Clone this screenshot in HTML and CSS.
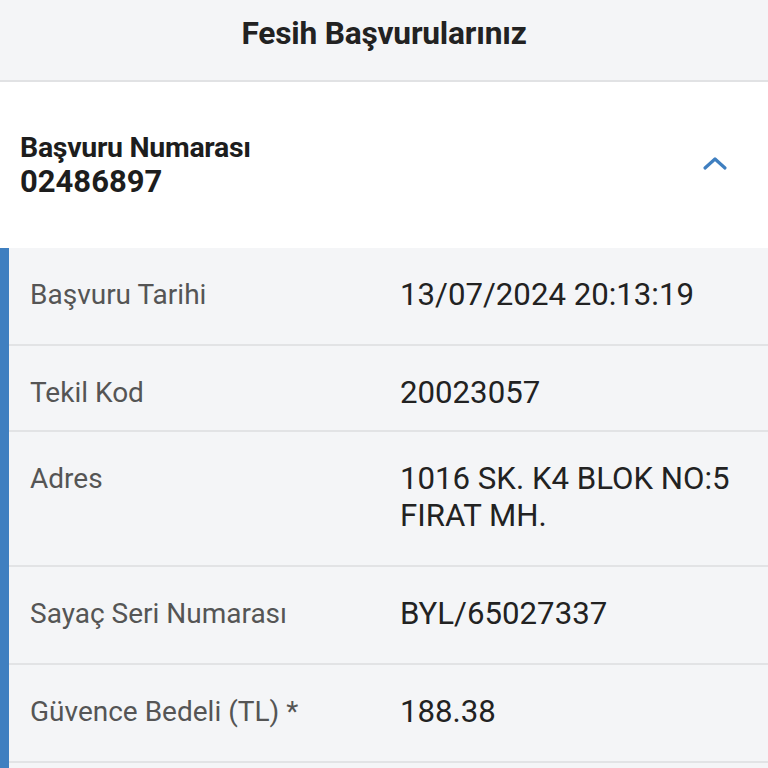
FILE: index.html
```html
<!DOCTYPE html>
<html lang="tr">
<head>
<meta charset="utf-8">
<link rel="stylesheet" href="styles.css">
</head>
<body>
<header class="topbar"><h1 class="title">Fesih Başvurularınız</h1></header>
<section class="card">
  <div class="card-head">
    <div class="head-text">
      <div class="head-label">Başvuru Numarası</div>
      <div class="head-number">02486897</div>
    </div>
    <svg class="chevron" width="26" height="16" viewBox="0 0 26 16"><path d="M3 13 L13 4 L23 13" fill="none" stroke="#3f7fc0" stroke-width="3.2" stroke-linecap="round" stroke-linejoin="round"/></svg>
  </div>
  <div class="details">
    <div class="row"><div class="label">Başvuru Tarihi</div><div class="value">13/07/2024 20:13:19</div></div>
    <div class="row row-tight"><div class="label">Tekil Kod</div><div class="value">20023057</div></div>
    <div class="row"><div class="label">Adres</div><div class="value">1016 SK. K4 BLOK NO:5<br>FIRAT MH.</div></div>
    <div class="row"><div class="label">Sayaç Seri Numarası</div><div class="value">BYL/65027337</div></div>
    <div class="row"><div class="label">Güvence Bedeli (TL) *</div><div class="value">188.38</div></div>
    <div class="row"><div class="label">&nbsp;</div><div class="value">&nbsp;</div></div>
  </div>
</section>
</body>
</html>
```
FILE: styles.css
```css
html, body { margin: 0; padding: 0; }
body {
  font-family: Roboto, "Noto Sans", sans-serif;
  background: #f4f5f7;
  width: 768px;
  height: 768px;
  overflow: hidden;
}
.topbar {
  height: 80px;
  background: #f4f5f7;
  border-bottom: 2px solid #e1e2e4;
  display: flex;
  align-items: center;
  justify-content: center;
}
.title {
  margin: 0;
  font-size: 31.7px;
  font-weight: 700;
  color: #222;
  letter-spacing: -0.2px;
  padding-bottom: 14px;
}
.card-head {
  background: #fff;
  height: 166px;
  display: flex;
  align-items: center;
  justify-content: space-between;
  padding: 0 40px 0 20px;
}
.head-text { padding-top: 2px; }
.head-label {
  font-size: 28.5px;
  font-weight: 700;
  color: #1d1d1d;
  line-height: 32px;
  letter-spacing: -0.3px;
}
.head-number {
  font-size: 31px;
  font-weight: 700;
  color: #1d1d1d;
  line-height: 36px;
}
.chevron { margin-bottom: 4px; }
.details {
  background: #f4f5f7;
  border-left: 9px solid #3f7fc0;
}
.row {
  display: flex;
  padding: 28px 0 31px 21px;
  border-bottom: 2px solid #e2e3e5;
  line-height: 37px;
}
.row-tight { padding-bottom: 19px; }
.label {
  width: 370px;
  font-size: 28px;
  color: #555;
}
.value {
  font-size: 31.2px;
  color: #222;
}
```
